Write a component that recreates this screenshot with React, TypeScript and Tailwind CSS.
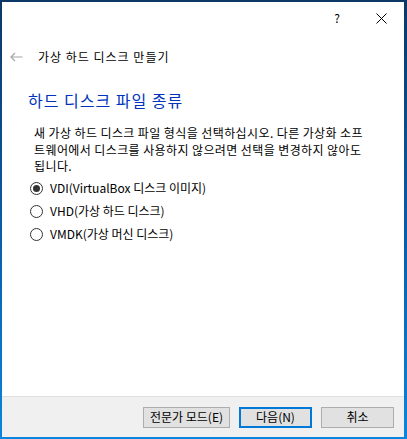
const font = "font-['Noto_Sans_CJK_KR','Noto_Sans',sans-serif]";

const Radio = ({ checked, label }: { checked?: boolean; label: string }) => (
  <div className="flex h-[23px] items-center">
    <span className="ml-[28px] flex h-[13px] w-[13px] items-center justify-center rounded-full border border-[#333333] bg-white">
      {checked && <span className="h-[7px] w-[7px] rounded-full bg-[#333333]" />}
    </span>
    <span className="ml-[7px] text-[12px] leading-none text-black">{label}</span>
  </div>
);

const Button = ({ label, primary, w }: { label: string; primary?: boolean; w: string }) => (
  <button
    className={
      primary
        ? `${w} h-[21px] border-2 border-[#0078d7] bg-[#e1e1e1] text-[12px] leading-none text-black`
        : `${w} h-[21px] border border-[#adadad] bg-[#e1e1e1] text-[12px] leading-none text-black`
    }
  >
    {label}
  </button>
);

export default function App() {
  return (
    <div className={`h-[439px] w-[407px] bg-gradient-to-b from-[#0b3866] via-[#0a5aa6] to-[#0a86dc] pt-[2px] pl-[2px] pr-[3px] pb-[2px] ${font}`}>
      <div className="flex h-full flex-col bg-white">
        {/* title bar */}
        <div className="flex h-[32px] items-center justify-end">
          <span className="mr-[36px] text-[12px] text-black">?</span>
          <svg width="11" height="11" viewBox="0 0 11 11" className="mr-[17px]">
            <path d="M0.5 0.5 L10.5 10.5 M10.5 0.5 L0.5 10.5" stroke="#000" strokeWidth="1" />
          </svg>
        </div>

        {/* back + wizard title */}
        <div className="flex h-[46px] items-center">
          <svg width="13" height="10" viewBox="0 0 13 10" className="ml-[8px]">
            <path d="M12.5 5 H1 M5 1 L1 5 L5 9" stroke="#a6a6a6" strokeWidth="1.2" fill="none" />
          </svg>
          <span className="ml-[15px] text-[12px] leading-none tracking-[1px] text-black">가상 하드 디스크 만들기</span>
        </div>

        {/* page heading */}
        <h1 className="mt-[9px] ml-[26px] text-[16px] leading-[22px] tracking-[1px] text-[#0033bc]">하드 디스크 파일 종류</h1>

        <p className="mt-[14px] ml-[32px] text-[12px] leading-[16.5px] tracking-[0.4px] text-black">
          새 가상 하드 디스크 파일 형식을 선택하십시오. 다른 가상화 소프
          <br />
          트웨어에서 디스크를 사용하지 않으려면 선택을 변경하지 않아도
          <br />
          됩니다.
        </p>

        <div className="mt-[2px] flex flex-col">
          <Radio checked label="VDI(VirtualBox 디스크 이미지)" />
          <Radio label="VHD(가상 하드 디스크)" />
          <Radio label="VMDK(가상 머신 디스크)" />
        </div>

        <div className="flex-1" />

        {/* button panel */}
        <div className="flex h-[41px] items-center justify-end gap-[9px] border-t border-[#dfdfdf] bg-[#f0f0f0] pr-[10px]">
          <Button label="전문가 모드(E)" w="w-[87px]" />
          <Button label="다음(N)" primary w="w-[73px]" />
          <Button label="취소" w="w-[73px]" />
        </div>
      </div>
    </div>
  );
}
